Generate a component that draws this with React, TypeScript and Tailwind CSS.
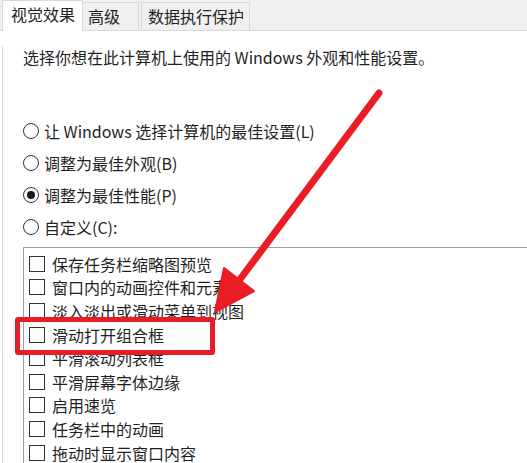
import { useState } from 'react'

const radios = [
  { id: 'auto', label: '让 Windows 选择计算机的最佳设置(L)' },
  { id: 'look', label: '调整为最佳外观(B)' },
  { id: 'perf', label: '调整为最佳性能(P)' },
  { id: 'custom', label: '自定义(C):' },
]

const effects = [
  '保存任务栏缩略图预览',
  '窗口内的动画控件和元素',
  '淡入淡出或滑动菜单到视图',
  '滑动打开组合框',
  '平滑滚动列表框',
  '平滑屏幕字体边缘',
  '启用速览',
  '任务栏中的动画',
  '拖动时显示窗口内容',
]

function Radio({ checked }: { checked: boolean }) {
  return (
    <span className="flex h-[16px] w-[16px] shrink-0 items-center justify-center rounded-full border border-[#333] bg-white">
      {checked && <span className="h-[8px] w-[8px] rounded-full bg-[#1a1a1a]" />}
    </span>
  )
}

function Checkbox() {
  return <span className="h-[16px] w-[16px] shrink-0 border border-[#333] bg-white" />
}

export default function App() {
  const [mode, setMode] = useState('perf')

  return (
    <div className="relative h-[463px] w-[527px] overflow-hidden bg-white font-['Noto_Sans_CJK_SC','Noto_Sans',sans-serif] text-[16px] text-[#1f1f1f]">
      <div className="flex h-[31px] items-end border-b border-[#d9d9d9] bg-[#f0f0f0] pl-[2px]">
        <div className="relative -mb-px h-[31px] w-[81px] border-x border-t border-[#d9d9d9] bg-white pl-[8px] leading-[27px]">视觉效果</div>
        <div className="h-[28px] w-[56px] border-r border-t border-[#d9d9d9] pl-[5px] leading-[26px]">高级</div>
        <div className="ml-[2px] h-[28px] w-[109px] border-x border-t border-[#d9d9d9] pl-[6px] leading-[26px]">数据执行保护</div>
      </div>

      <div className="ml-[2px] h-[432px] border-l border-[#d9d9d9] pl-[20px]">
        <p className="mt-[15px] leading-[22px]">选择你想在此计算机上使用的 Windows 外观和性能设置。</p>

        <div className="mt-[47px] flex flex-col">
          {radios.map((r) => (
            <label key={r.id} className="flex h-[32px] cursor-pointer items-center gap-[5px]" onClick={() => setMode(r.id)}>
              <Radio checked={mode === r.id} />
              <span>{r.label}</span>
            </label>
          ))}
        </div>

        <div className="mt-[4px] border-l border-t border-[#a0a0a0] pl-[5px] pt-[4px]">
          {effects.map((e) => (
            <div key={e} className="flex h-[23.6px] items-center gap-[7px] leading-none">
              <Checkbox />
              <span>{e}</span>
            </div>
          ))}
        </div>
      </div>

      {/* red annotation */}
      <div className="absolute left-[15px] top-[317px] h-[38px] w-[200px] rounded-[3px] border-[5px] border-[#e81c24]" />
      <svg className="absolute inset-0" width="527" height="463" viewBox="0 0 527 463">
        <line x1="379" y1="93" x2="238" y2="282" stroke="#ea1c24" strokeWidth="7" strokeLinecap="round" />
        <polygon points="215,312 254,291 224,268" fill="#ea1c24" stroke="#ea1c24" strokeWidth="2" strokeLinejoin="round" />
      </svg>
    </div>
  )
}
